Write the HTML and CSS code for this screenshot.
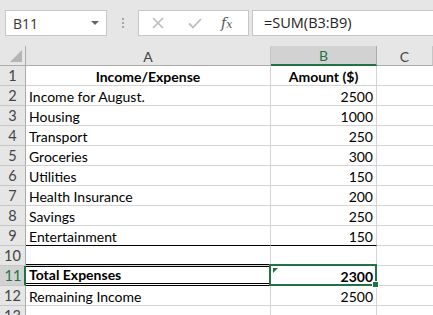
FILE: index.html
```html
<!DOCTYPE html>
<html>
<head>
<meta charset="utf-8">
<link rel="stylesheet" href="styles.css">
</head>
<body>
<div class="toolbar">
  <div class="namebox"><span class="nb-text">B11</span><span class="nb-arrow"></span></div>
  <div class="dots"><i></i><i></i><i></i></div>
  <div class="btns">
    <svg class="ic-x" width="12" height="12" viewBox="0 0 12 12"><path d="M1 1L11 11M11 1L1 11" stroke="#bdbdbd" stroke-width="1.6" fill="none"/></svg>
    <svg class="ic-check" width="14" height="11" viewBox="0 0 14 11"><path d="M1 5.5L5 9.5L13 1" stroke="#bdbdbd" stroke-width="1.8" fill="none"/></svg>
    <span class="fx">f<span class="fx-x">x</span></span>
  </div>
  <div class="formula">=SUM(B3:B9)</div>
</div>
<div class="grid">
  <div class="hd corner"><span class="tri"></span></div>
  <div class="hd col">A</div>
  <div class="hd col selcol">B</div>
  <div class="hd col">C</div>

  <div class="rh">1</div><div class="c b ctr">Income/Expense</div><div class="c b ctr">Amount ($)</div><div class="c e"></div>
  <div class="rh">2</div><div class="c">Income for August.</div><div class="c num">2500</div><div class="c e"></div>
  <div class="rh">3</div><div class="c">Housing</div><div class="c num">1000</div><div class="c e"></div>
  <div class="rh">4</div><div class="c">Transport</div><div class="c num">250</div><div class="c e"></div>
  <div class="rh">5</div><div class="c">Groceries</div><div class="c num">300</div><div class="c e"></div>
  <div class="rh">6</div><div class="c">Utilities</div><div class="c num">150</div><div class="c e"></div>
  <div class="rh">7</div><div class="c">Health Insurance</div><div class="c num">200</div><div class="c e"></div>
  <div class="rh">8</div><div class="c">Savings</div><div class="c num">250</div><div class="c e"></div>
  <div class="rh">9</div><div class="c blk">Entertainment</div><div class="c num blk">150</div><div class="c e"></div>
  <div class="rh">10</div><div class="c"></div><div class="c"></div><div class="c e"></div>
  <div class="rh selrow">11</div><div class="c b dbl">Total Expenses</div><div class="c b num sel"><span class="flag"></span>2300</div><div class="c e"></div>
  <div class="rh">12</div><div class="c">Remaining Income</div><div class="c num">2500</div><div class="c e"></div>
  <div class="rh">13</div><div class="c"></div><div class="c"></div><div class="c e"></div>
</div>
</body>
</html>
```
FILE: styles.css
```css
html, body { margin: 0; padding: 0; background: #fff; overflow: hidden; }
body { width: 433px; height: 315px; font-family: "Open Sans", "Noto Sans", sans-serif; }

.toolbar {
  height: 46px;
  background: #e6e6e6;
  display: flex;
  align-items: flex-start;
  padding-top: 10px;
  box-sizing: border-box;
}
.namebox {
  margin-left: 5px;
  width: 102px;
  height: 26px;
  box-sizing: border-box;
  background: #fff;
  border: 1px solid #c6c6c6;
  display: flex;
  align-items: center;
  justify-content: space-between;
  padding: 0 7px 0 7px;
  font-size: 14px;
  color: #333;
}
.nb-arrow {
  width: 0; height: 0;
  border-left: 4px solid transparent;
  border-right: 4px solid transparent;
  border-top: 4px solid #666;
}
.dots {
  width: 31px;
  height: 26px;
  display: flex;
  flex-direction: column;
  align-items: center;
  justify-content: center;
  gap: 2px;
}
.dots i { display: block; width: 2px; height: 2px; background: #a6a6a6; }
.btns {
  width: 111px;
  height: 26px;
  box-sizing: border-box;
  background: #fff;
  border: 1px solid #c6c6c6;
  display: flex;
  align-items: center;
}
.ic-x { margin-left: 13px; }
.ic-check { margin-left: 24px; }
.fx {
  margin-left: 19px;
  font-family: "DejaVu Serif", "Liberation Serif", serif;
  font-style: italic;
  font-size: 14px;
  color: #555;
}
.fx-x { font-size: 11px; }
.formula {
  margin-left: 3px;
  flex: 1;
  height: 26px;
  box-sizing: border-box;
  background: #fff;
  border: 1px solid #c6c6c6;
  border-right: none;
  padding-left: 11px;
  font-size: 14.5px;
  line-height: 24px;
  color: #222;
}

.grid {
  display: grid;
  grid-template-columns: 26px 245px 106px 1fr;
  grid-auto-rows: 20px;
  font-family: "Lato", "Open Sans", sans-serif;
  font-size: 14px;
  color: #000;
}
.grid > div { box-sizing: border-box; }
.hd {
  background: #e6e6e6;
  border-bottom: 1px solid #ababab;
  border-right: 1px solid #c6c6c6;
  display: flex;
  align-items: center;
  justify-content: center;
  color: #444;
  font-size: 14px;
  padding-top: 1px;
}
.corner { position: relative; border-right: 1px solid #ababab; }
.tri {
  position: absolute;
  right: 3px; bottom: 3px;
  width: 0; height: 0;
  border-left: 12px solid transparent;
  border-bottom: 12px solid #b4b4b4;
}
.selcol {
  background: #d2d2d2;
  color: #217346;
  border-bottom: 2px solid #217346;
  border-right-color: #ababab;
}
.rh {
  background: #e6e6e6;
  border-right: 1px solid #ababab;
  border-bottom: 1px solid #c6c6c6;
  display: flex;
  align-items: flex-end;
  justify-content: center;
  padding-bottom: 0;
  color: #444;
  font-size: 14.5px;
  line-height: 18px;
}
.selrow {
  background: #d2d2d2;
  border-right: 2px solid #217346;
  color: #217346;
  padding-left: 2px;
}
.c {
  border-right: 1px solid #d4d4d4;
  border-bottom: 1px solid #d4d4d4;
  display: flex;
  align-items: flex-end;
  padding: 0 3px 0 3px;
  line-height: 17px;
  white-space: nowrap;
  overflow: visible;
}
.c.e { border-right: none; }
.b { font-weight: bold; }
.ctr { justify-content: center; }
.num { justify-content: flex-end; }
.blk { border-bottom-color: #000; }
.dbl {
  border-top: 3px double #000;
  border-bottom: 3px double #000;
  margin-top: -2px;
  height: 22px;
  padding-bottom: 0;
}
.sel { position: relative; }
.sel::after {
  content: "";
  position: absolute;
  left: -2px; top: -2px; right: -1px; bottom: -1px;
  border: 2px solid #217346;
  z-index: 2;
}
.sel::before {
  content: "";
  position: absolute;
  right: -3px; bottom: -3px;
  width: 5px; height: 5px;
  background: #217346;
  border: 1px solid #fff;
  z-index: 3;
}
.flag {
  position: absolute;
  left: 2px; top: 2px;
  width: 0; height: 0;
  border-top: 5px solid #217346;
  border-right: 5px solid transparent;
}
```
